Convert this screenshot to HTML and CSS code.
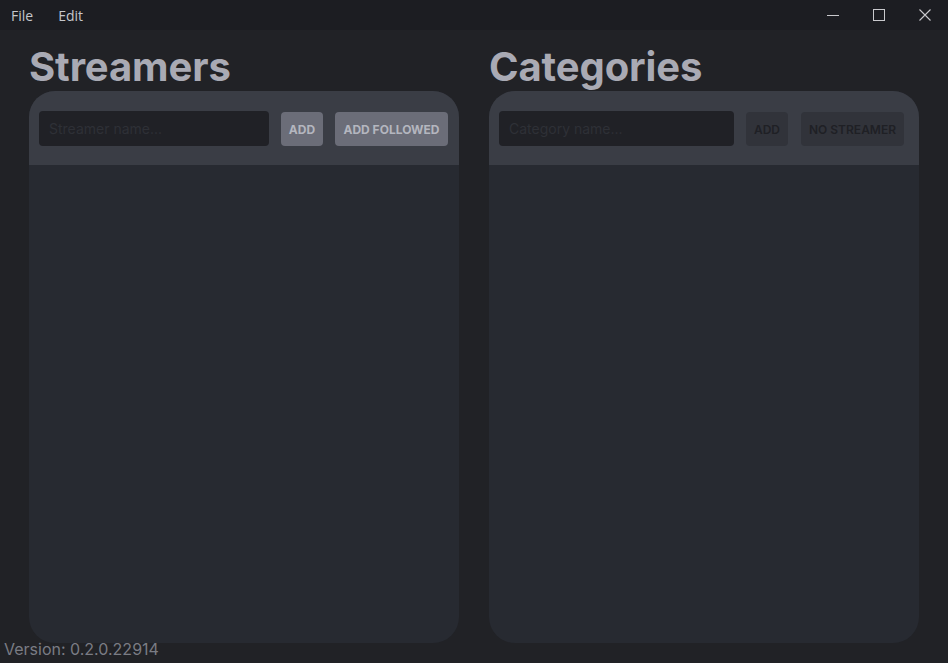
FILE: index.html
```html
<!DOCTYPE html>
<html>
<head>
<meta charset="utf-8">
<link rel="stylesheet" href="styles.css">
</head>
<body>
<div class="titlebar">
  <div class="menu">
    <span class="menu-item">File</span>
    <span class="menu-item">Edit</span>
  </div>
  <div class="controls">
    <span class="ctl"><svg width="12" height="12" viewBox="0 0 12 12"><path d="M0 6.5H12" stroke="#c9c9cd" stroke-width="1"/></svg></span>
    <span class="ctl"><svg width="12" height="12" viewBox="0 0 12 12"><rect x="0.5" y="0.5" width="11" height="11" fill="none" stroke="#c9c9cd" stroke-width="1"/></svg></span>
    <span class="ctl"><svg width="12" height="12" viewBox="0 0 12 12"><path d="M0.5 0.5L11.5 11.5M11.5 0.5L0.5 11.5" stroke="#c9c9cd" stroke-width="1.1"/></svg></span>
  </div>
</div>
<main class="main">
  <section class="col">
    <h1 class="title">Streamers</h1>
    <div class="panel">
      <div class="panel-head">
        <input class="field" placeholder="Streamer name...">
        <button class="btn btn-add">ADD</button>
        <button class="btn btn-wide">ADD FOLLOWED</button>
      </div>
      <div class="panel-body"></div>
    </div>
  </section>
  <section class="col">
    <h1 class="title">Categories</h1>
    <div class="panel">
      <div class="panel-head right">
        <input class="field" placeholder="Category name...">
        <button class="btn btn-add off">ADD</button>
        <button class="btn btn-ns off">NO STREAMER</button>
      </div>
      <div class="panel-body"></div>
    </div>
  </section>
</main>
<div class="version">Version: 0.2.0.22914</div>
</body>
</html>
```
FILE: styles.css
```css
* { box-sizing: border-box; }
html, body { margin: 0; padding: 0; }
body {
  width: 948px;
  height: 663px;
  background: #212226;
  font-family: Inter, "Noto Sans", sans-serif;
  overflow: hidden;
  position: relative;
}
.titlebar {
  height: 30px;
  background: #1c1d22;
  display: flex;
  justify-content: space-between;
  align-items: center;
}
.menu {
  display: flex;
  padding-left: 11px;
  gap: 25px;
  font-family: "Open Sans", "Noto Sans", sans-serif;
  font-size: 14px;
  color: #c6c7cc;
}
.controls { display: flex; height: 30px; }
.ctl {
  width: 46px;
  height: 30px;
  display: flex;
  align-items: center;
  justify-content: center;
}
.main {
  display: flex;
  gap: 30px;
  padding: 13px 0 0 29px;
}
.col { width: 430px; display: flex; flex-direction: column; }
.title {
  margin: 0 0 1px 0;
  font-size: 40px;
  line-height: 47px;
  font-weight: 700;
  color: #a9aab4;
  letter-spacing: -0.1px;
}
.panel {
  height: 552px;
  border-radius: 26px;
  overflow: hidden;
  background: #272a31;
  display: flex;
  flex-direction: column;
}
.panel-head {
  height: 74px;
  background: #3a3d45;
  display: flex;
  align-items: flex-start;
  padding: 20px 11px 0 10px;
  gap: 12px;
}
.panel-head.right { padding-right: 15px; }
.field {
  flex: 1;
  min-width: 0;
  height: 35px;
  border: none;
  border-radius: 4px;
  background: #202126;
  padding: 0 10px;
  font-family: Inter, "Noto Sans", sans-serif;
  font-size: 14px;
  color: #cfd0d6;
  outline: none;
}
.field::placeholder { color: #2e3036; }
.btn {
  height: 34px;
  margin-top: 1px;
  border: none;
  border-radius: 4px;
  background: #6b6d78;
  color: #b4b6bf;
  font-family: Inter, "Noto Sans", sans-serif;
  font-weight: 700;
  font-size: 12px;
  padding: 0;
}
.btn-add { width: 42px; }
.btn-wide { width: 113px; }
.btn-ns { width: 103px; margin-left: 1px; }
.btn.off {
  background: #31333a;
  color: #1f2025;
  font-weight: 600;
}
.panel-body { flex: 1; }
.version {
  position: absolute;
  left: 4px;
  top: 639px;
  font-size: 16px;
  color: #7a7c84;
  line-height: 20px;
}
```
